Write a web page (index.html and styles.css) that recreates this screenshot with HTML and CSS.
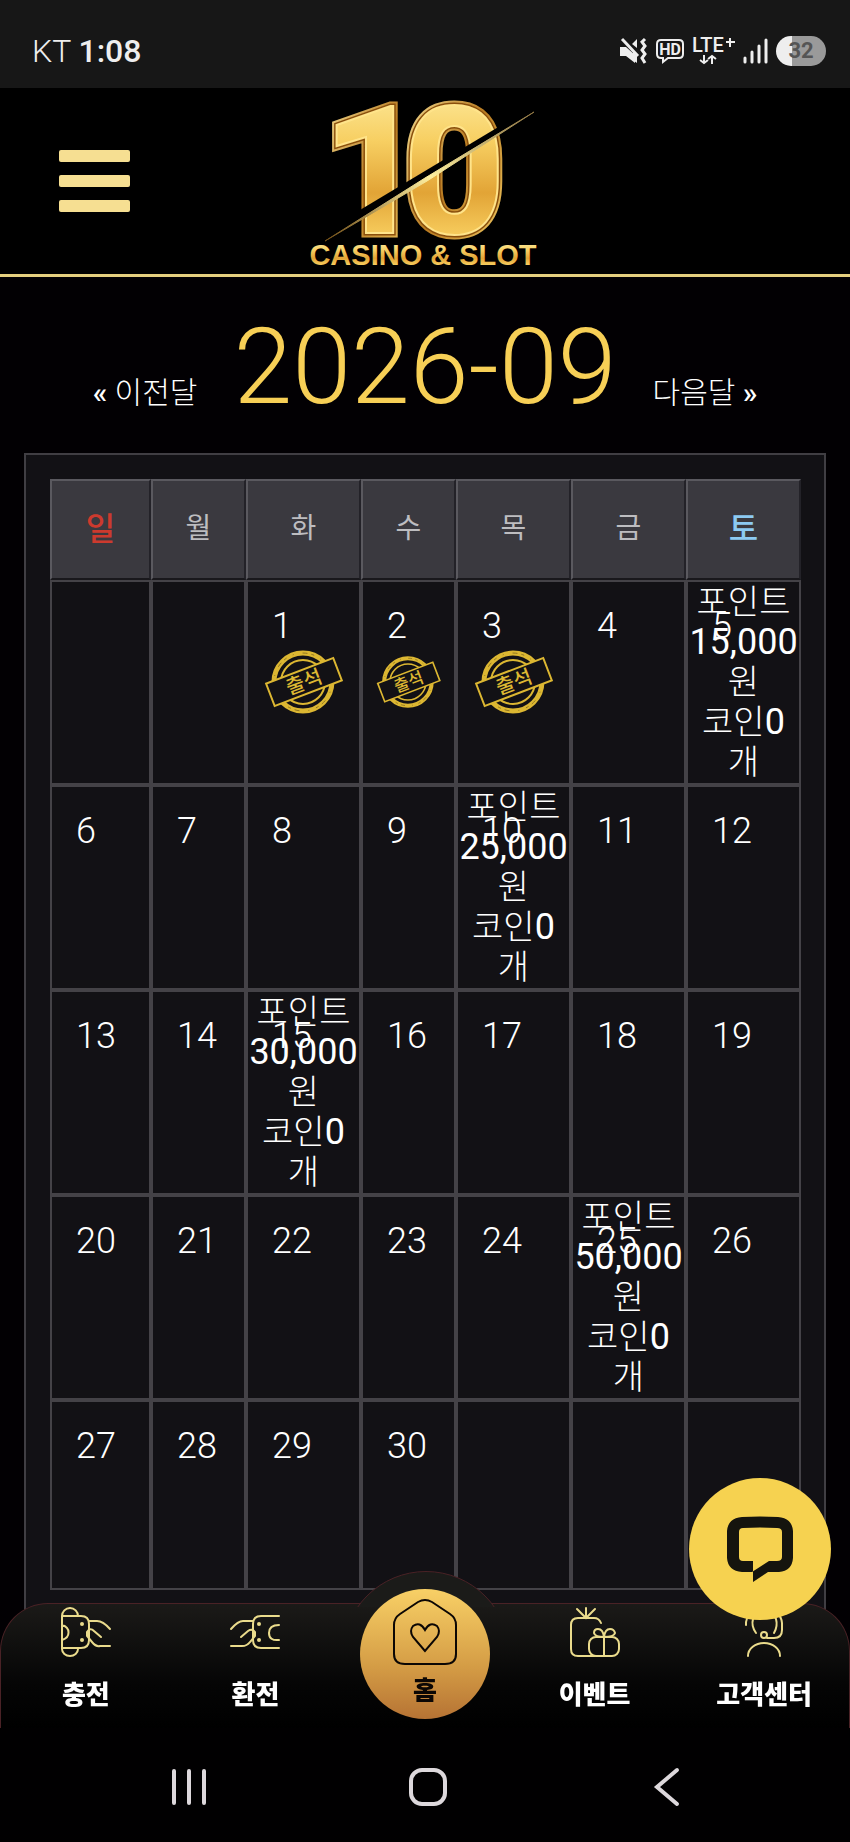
FILE: index.html
```html
<!DOCTYPE html>
<html lang="ko">
<head>
  <meta charset="UTF-8" />
  <meta name="viewport" content="width=device-width, initial-scale=1" />
  <title>출석체크</title>
  <link rel="stylesheet" href="styles.css">
</head>
<body>

  <!-- Shared drawings -->
  <svg class="defs" width="0" height="0" aria-hidden="true">
    <symbol id="stamp" viewBox="0 0 80 64">
      <circle cx="39" cy="32" r="29" fill="none" stroke="#dcb732" stroke-width="5" />
      <circle cx="39" cy="32" r="29" fill="none" stroke="#8f741f" stroke-width="1" stroke-dasharray="3 7 1 9 5 4" />
      <circle cx="39" cy="32" r="22" fill="none" stroke="#dcb732" stroke-width="2" />
      <g transform="rotate(-21 40 32)">
        <rect x="4" y="20" width="72" height="24" fill="#121115" stroke="#dcb732" stroke-width="2" />
        <text x="40" y="39" text-anchor="middle" font-size="20" font-weight="500" fill="#dcb732">출석</text>
      </g>
    </symbol>
  </svg>

  <div class="status-bar">
    <div class="status-left"><span class="carrier">KT</span> <span class="clock">1:08</span></div>
    <div class="status-icons">
      <svg width="28" height="26" viewBox="0 0 28 26">
        <path d="M0 9h6l9 8v8l-9-7H0z M12 6l5-5v9z M13 14l4 4v7l-4-3z" fill="#eee" />
        <path d="M2 1l16 17" stroke="#eee" stroke-width="3" />
        <path d="M25 1l-3 3 3 4-3 4 3 4-3 4 3 5" fill="none" stroke="#eee" stroke-width="3" />
      </svg>
      <svg width="28" height="24" viewBox="0 0 28 24">
        <path d="M5 1h18q4 0 4 4v10q0 4-4 4H12l-5 4v-4H5q-4 0-4-4V5q0-4 4-4z" fill="none" stroke="#eee" stroke-width="2" />
        <text x="14" y="16" text-anchor="middle" font-size="16" font-weight="700" fill="#eee">HD</text>
      </svg>
      <svg width="43" height="28" viewBox="0 0 43 28">
        <text x="0" y="15" font-size="20" font-weight="500" fill="#eee">LTE</text>
        <path d="M34 5h9M38 1v9M12 18v8M8 23l4 3 4-3M20 27v-8M16 22l4-3 4 3" fill="none" stroke="#eee" stroke-width="2" />
      </svg>
      <svg width="25" height="26" viewBox="0 0 25 26">
        <path d="M2 24v-4M9 24V14M16 24V8M23 24V2" stroke="#eee" stroke-width="3" stroke-linecap="round" />
      </svg>
      <span class="battery">32</span>
    </div>
  </div>

  <header class="site-header">
    <button class="menu-btn" aria-label="메뉴"><span></span><span></span><span></span></button>
    <a class="logo" href="#" aria-label="10 CASINO &amp; SLOT">
      <svg width="240" height="172" viewBox="0 0 240 172">
        <defs>
          <linearGradient id="gold" x1="0" y1="0" x2="0" y2="1">
            <stop offset="0" stop-color="#fff3b0" />
            <stop offset="0.35" stop-color="#f7cf62" />
            <stop offset="0.6" stop-color="#e2a436" />
            <stop offset="0.8" stop-color="#f6cb5c" />
            <stop offset="1" stop-color="#b06c12" />
          </linearGradient>
          <linearGradient id="rim" x1="0" y1="0" x2="1" y2="1">
            <stop offset="0" stop-color="#fff0a8" />
            <stop offset="0.5" stop-color="#b87a20" />
            <stop offset="1" stop-color="#ffdc72" />
          </linearGradient>
          <linearGradient id="blade" x1="0" y1="1" x2="1" y2="0">
            <stop offset="0" stop-color="#6e4b14" />
            <stop offset="0.5" stop-color="#fff0a0" />
            <stop offset="1" stop-color="#8d7442" />
          </linearGradient>
        </defs>
        <g class="logo-number">
          <g fill="none" stroke="url(#rim)" stroke-width="9">
            <text x="17" y="138">1</text>
            <text x="98" y="138">0</text>
          </g>
          <g fill="none" stroke="#8a4f0c" stroke-width="5">
            <text x="17" y="138">1</text>
            <text x="98" y="138">0</text>
          </g>
          <g fill="url(#gold)" stroke="#ffe48a" stroke-width="2">
            <text x="17" y="138">1</text>
            <text x="98" y="138">0</text>
          </g>
        </g>
        <path d="M21 145L228 17L200 28L20 136z" fill="#000" />
        <path d="M20 146L120 83L229 17L122 86z" fill="url(#blade)" stroke="url(#blade)" stroke-width="1" />
        <text class="logo-name" x="118" y="170" text-anchor="middle" fill="url(#gold)">CASINO &amp; SLOT</text>
      </svg>
    </a>
  </header>

  <main>
    <div class="month-nav">
      <a href="#"><b>«</b> 이전달</a>
      <h1>2026-09</h1>
      <a href="#">다음달 <b>»</b></a>
    </div>

    <div class="calendar-box">
      <table class="calendar">
        <colgroup>
          <col class="col-sun"><col class="col-narrow"><col class="col-wide"><col class="col-narrow">
          <col class="col-wide"><col class="col-wide"><col class="col-wide">
        </colgroup>
        <thead>
          <tr>
            <th class="sun">일</th><th>월</th><th>화</th><th>수</th><th>목</th><th>금</th><th class="sat">토</th>
          </tr>
        </thead>
        <tbody>
          <tr>
            <td></td>
            <td></td>
            <td><span class="day">1</span><div class="stamp"><svg role="img" aria-label="출석"><use href="#stamp" /></svg></div></td>
            <td><span class="day">2</span><div class="stamp"><svg role="img" aria-label="출석"><use href="#stamp" /></svg></div></td>
            <td><span class="day">3</span><div class="stamp"><svg role="img" aria-label="출석"><use href="#stamp" /></svg></div></td>
            <td><span class="day">4</span></td>
            <td><span class="day">5</span><div class="reward">포인트<br><b>15,000</b><br>원<br>코인<b>0</b><br>개</div></td>
          </tr>
          <tr>
            <td><span class="day">6</span></td>
            <td><span class="day">7</span></td>
            <td><span class="day">8</span></td>
            <td><span class="day">9</span></td>
            <td><span class="day">10</span><div class="reward">포인트<br><b>25,000</b><br>원<br>코인<b>0</b><br>개</div></td>
            <td><span class="day">11</span></td>
            <td><span class="day">12</span></td>
          </tr>
          <tr>
            <td><span class="day">13</span></td>
            <td><span class="day">14</span></td>
            <td><span class="day">15</span><div class="reward">포인트<br><b>30,000</b><br>원<br>코인<b>0</b><br>개</div></td>
            <td><span class="day">16</span></td>
            <td><span class="day">17</span></td>
            <td><span class="day">18</span></td>
            <td><span class="day">19</span></td>
          </tr>
          <tr>
            <td><span class="day">20</span></td>
            <td><span class="day">21</span></td>
            <td><span class="day">22</span></td>
            <td><span class="day">23</span></td>
            <td><span class="day">24</span></td>
            <td><span class="day">25</span><div class="reward">포인트<br><b>50,000</b><br>원<br>코인<b>0</b><br>개</div></td>
            <td><span class="day">26</span></td>
          </tr>
          <tr class="last-week">
            <td><span class="day">27</span></td>
            <td><span class="day">28</span></td>
            <td><span class="day">29</span></td>
            <td><span class="day">30</span></td>
            <td></td>
            <td></td>
            <td></td>
          </tr>
        </tbody>
      </table>
    </div>
  </main>

  <!-- Bottom menu -->
  <div class="bottom">
    <nav class="tab-bar">
      <a href="#">
        <svg class="tab-icon" viewBox="0 0 50 50">
          <path d="M1 9V42M1 9a8 8 0 0 1 16 0M1 42a8 7 0 0 0 16 0M1 9H20q8 0 8 8v16q0 8-8 8H1M1 18a10 8 0 0 1 0 15" />
          <path d="M28 14h8q6 0 13 8M40 30l-7-6q-4-4-7 1v4l5 6q4 5 8 4h10" />
          <circle class="dot" cx="21" cy="17" r="2" /><circle class="dot" cx="21" cy="33" r="2" />
        </svg>
        <span>충전</span>
      </a>
      <a href="#">
        <svg class="tab-icon" viewBox="0 0 50 50">
          <path d="M49 9H31q-8 0-8 8v16q0 8 8 8h18M49 18q-10 0-10 8t10 7" />
          <path d="M1 22q7-8 12-8h10M11 30l7-6q4-3 7 1v4l-5 6q-3 4-8 4H1" />
          <circle class="dot" cx="29" cy="17" r="2" /><circle class="dot" cx="29" cy="33" r="2" />
        </svg>
        <span>환전</span>
      </a>
      <a class="home" href="#">
        <svg viewBox="0 0 66 68">
          <path d="M26 4q7-4 14 0l18 12q6 4 6 11v29q0 10-11 10H13Q2 66 2 56V27q0-7 6-11z" />
          <path d="M33 53L21 39q-4-6 0-11 7-5 12 4 5-9 12-4 4 5 0 11z" />
        </svg>
        <span>홈</span>
      </a>
      <a href="#">
        <svg class="tab-icon" viewBox="0 0 50 50">
          <path d="M31 16q-2-5-7-5H8q-7 0-7 7v24q0 7 7 7h17M16 11V1M7 2l9 9 9-9" />
          <rect x="19" y="30" width="30" height="19" rx="7" />
          <path d="M34 49V30q-9 0-10-4 0-4 4-4 5 0 6 8 1-8 6-8 4 0 5 4-1 4-11 4" />
        </svg>
        <span>이벤트</span>
      </a>
      <a href="#">
        <svg class="tab-icon" viewBox="0 0 50 50">
          <path d="M7 18a18 16 0 0 1 36-2v7q0 8-8 8h-7M17 26q-5-7-3-14 5-8 12-8t11 8q2 7-2 14M9 49a16 13 0 0 1 32 0" />
          <circle cx="25" cy="28" r="3" />
        </svg>
        <span>고객센터</span>
      </a>
    </nav>
    <div class="system-nav">
      <button aria-label="최근 앱"><svg width="40" height="40" viewBox="0 0 40 40"><path d="M5 4v32M20 4v32M35 4v32" /></svg></button>
      <button aria-label="홈 화면"><svg width="40" height="40" viewBox="0 0 40 40"><rect x="3" y="3" width="34" height="34" rx="11" /></svg></button>
      <button aria-label="뒤로"><svg width="40" height="40" viewBox="0 0 40 40"><path d="M30 3L10 20l20 17" /></svg></button>
    </div>
  </div>

  <button class="chat-btn" aria-label="채팅 상담">
    <svg width="66" height="66" viewBox="0 0 66 66">
      <path fill-rule="evenodd" fill="#15140e" d="M15 1q18-1 36 0 14 1 15 14v27q-1 13-14 14H41L26 66V45H16q-4 0-4-4V16q0-4 4-4 17-1 34 0 5 0 5 4v25q0 4-5 4h-8L25 56H15Q1 55 0 42V15Q1 2 15 1z" />
    </svg>
  </button>

</body>
</html>
```

FILE: styles.css
```css
* {
  box-sizing: border-box;
  margin: 0;
  padding: 0;
}

body {
  font-family: Roboto, 'Noto Sans CJK KR', sans-serif;
  font-weight: 300;
  background-color: #020003;
  color: #fff;
  min-height: 100vh;
  padding-bottom: 224px;
}

a {
  color: inherit;
  text-decoration: none;
}

button {
  border: none;
  background: none;
  cursor: pointer;
}

svg {
  display: block;
  overflow: visible;
}

.defs {
  position: absolute;
}

/* Status bar */
.status-bar {
  display: flex;
  justify-content: space-between;
  align-items: center;
  height: 88px;
  padding: 14px 24px 0 32px;
  background-color: #171717;
  color: #eee;
}

.status-left {
  font-size: 32px;
}

.clock {
  font-weight: 500;
}

.status-icons {
  display: flex;
  align-items: center;
  gap: 8px;
}

.battery {
  width: 50px;
  height: 30px;
  border-radius: 15px;
  background: linear-gradient(to right, #eee 32%, #9a9a9a 32%);
  color: #555;
  font-size: 22px;
  font-weight: 700;
  line-height: 30px;
  text-align: center;
}

/* Header */
.site-header {
  display: grid;
  grid-template-columns: 1fr auto 1fr;
  align-items: center;
  height: 189px;
  padding: 0 59px;
  background-color: #000;
  border-bottom: 3px solid #e5cf7e;
}

.menu-btn {
  display: flex;
  flex-direction: column;
  gap: 13px;
  width: 71px;
}

.menu-btn span {
  height: 12px;
  border-radius: 2px;
  background-color: #f6df92;
}

.logo-number {
  font-size: 178px;
  font-weight: 800;
}

.logo-name {
  font-family: 'Liberation Sans', sans-serif;
  font-size: 29px;
  font-weight: bold;
}

/* Month */
.month-nav {
  display: flex;
  justify-content: center;
  align-items: baseline;
  gap: 36px;
  padding-top: 30px;
  height: 176px;
  font-size: 30px;
}

.month-nav h1 {
  font-size: 106px;
  font-weight: 300;
  line-height: 120px;
  color: #f7cf56;
}

.month-nav b {
  font-weight: 500;
}

/* Calendar */
.calendar-box {
  margin: 0 24px;
  padding: 24px;
  background-color: #121115;
  border: 2px solid #403e43;
}

.calendar {
  width: 100%;
  table-layout: fixed;
  border-collapse: separate;
  border-spacing: 0;
}

.col-sun {
  width: 101px;
}

.col-narrow {
  width: 95px;
}

.col-wide {
  width: 115px;
}

.calendar th {
  height: 101px;
  padding-bottom: 8px;
  background-color: #3a393f;
  border: 2px solid;
  border-color: #5a595f #232228 #19181c #5a595f;
  color: #bdbdc0;
  font-size: 28px;
  font-weight: 400;
}

.calendar .sun {
  color: #cc3a2e;
  font-size: 32px;
  font-weight: 500;
}

.calendar .sat {
  color: #8ccaf2;
  font-size: 32px;
  font-weight: 500;
}

.calendar td {
  position: relative;
  height: 205px;
  padding-top: 24px;
  border: 2px solid #444247;
  vertical-align: top;
}

.calendar .last-week td {
  height: 190px;
}

.day {
  display: block;
  padding-left: 24px;
  font-size: 36px;
  line-height: 40px;
}

.stamp {
  display: flex;
  justify-content: center;
  align-items: center;
  height: 72px;
}

.stamp svg {
  width: 72%;
  height: 64px;
}

.reward {
  position: absolute;
  top: 0;
  left: 0;
  right: 0;
  font-size: 34px;
  line-height: 40px;
  text-align: center;
}

.reward b {
  font-size: 36px;
  font-weight: 400;
  line-height: 1;
}

/* Bottom menu */
.bottom {
  position: fixed;
  left: 0;
  right: 0;
  bottom: 0;
}

.tab-bar {
  position: relative;
  display: grid;
  grid-template-columns: repeat(5, 1fr);
  height: 125px;
  background: linear-gradient(#1b1a18, #050505 65%, #000);
  border: 1px solid #4a2226;
  border-bottom: none;
  border-radius: 48px 48px 0 0;
  font-size: 26px;
  font-weight: 900;
}

.tab-bar a {
  display: flex;
  flex-direction: column;
  align-items: center;
  gap: 19px;
  padding-top: 3px;
  line-height: 38px;
}

.tab-icon {
  width: 50px;
  height: 50px;
  fill: none;
  stroke: #eadb8c;
  stroke-width: 2;
  stroke-linecap: round;
}

.tab-icon .dot {
  fill: #eadb8c;
  stroke: none;
}

/* raised arc behind the home button */
.tab-bar::before {
  content: "";
  position: absolute;
  top: -33px;
  left: 50%;
  width: 166px;
  height: 166px;
  margin-left: -83px;
  border: 1px solid #4a2226;
  border-radius: 50%;
  background: #1b1b19;
  clip-path: inset(0 0 132px 0);
}

.tab-bar .home {
  position: absolute;
  top: -15px;
  left: 50%;
  width: 130px;
  height: 130px;
  margin-left: -65px;
  padding-top: 9px;
  gap: 6px;
  border-radius: 50%;
  background: linear-gradient(#f8d066, #d49c45 60%, #b67334);
  color: #0c0704;
}

.home svg {
  width: 66px;
  height: 68px;
  fill: none;
  stroke: #0c0704;
  stroke-width: 2;
}

.home ~ a:nth-of-type(4) {
  grid-column: 4;
}

.system-nav {
  display: flex;
  justify-content: space-around;
  align-items: center;
  height: 114px;
  padding: 4px 64px 0 70px;
  background-color: #010001;
}

.system-nav svg {
  fill: none;
  stroke: #ddd8dc;
  stroke-width: 4;
  stroke-linecap: round;
}

.chat-btn {
  position: fixed;
  right: 19px;
  bottom: 222px;
  display: flex;
  justify-content: center;
  align-items: center;
  width: 142px;
  height: 142px;
  border-radius: 50%;
  background-color: #f6d250;
}
```
